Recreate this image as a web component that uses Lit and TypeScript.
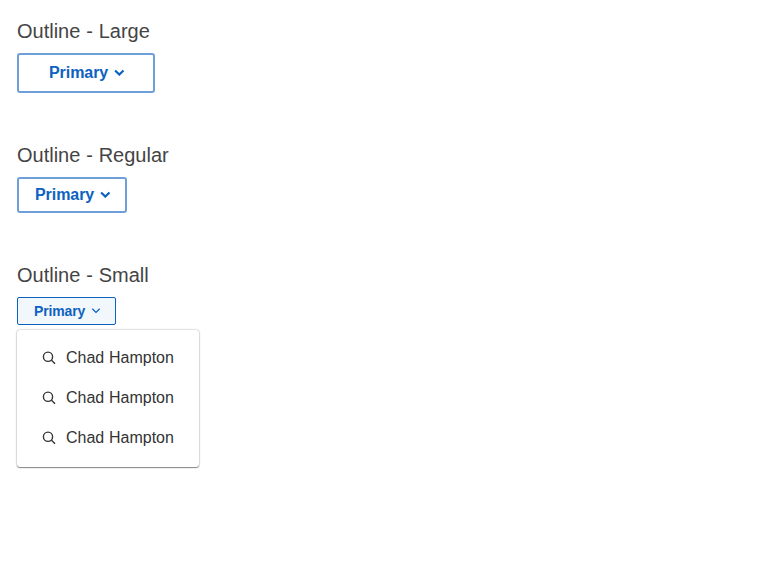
import { LitElement, html, css } from "lit";
import { customElement, property } from "lit/decorators.js";

@customElement("dropdown-button")
class DropdownButton extends LitElement {
  @property({ reflect: true }) size = "regular";
  @property({ type: Boolean, reflect: true }) open = false;

  static styles = css`
    :host { display: block; }
    button {
      display: flex; align-items: center; justify-content: flex-start;
      box-sizing: border-box; margin: 0; padding: 0 0 0 16px;
      font: bold 16px/20px "Liberation Sans", Arial, sans-serif;
      letter-spacing: -.06px;
      color: #0c62c0; background: #fff;
      border: 2px solid #6f9fd9; border-radius: 3px;
    }
    span { width: 59px; white-space: nowrap; }
    svg { display: block; flex: none; width: 12px; height: 8px; margin: -2px 0 0 5px; }
    path { fill: none; stroke: currentColor; stroke-width: 2.1; }
    :host([size="large"]) button { width: 138px; height: 40px; padding-left: 30px; }
    :host([size="regular"]) button { width: 110px; height: 36px; }
    :host([size="small"]) button {
      width: 99px; height: 28px; font-size: 14px; letter-spacing: -.15px;
      border: 1px solid #0c62c0; border-radius: 2px; background: #f2f7fc;
    }
    :host([size="small"]) span { width: 51px; }
    :host([size="small"]) svg { margin: -2px 0 0 5px; }
    :host([size="small"]) path { stroke-width: 1.3; }
  `;

  render() {
    const d = this.size === "small" ? "M2.3 2.7 6 6.4 9.7 2.7" : "M2.1 2.4 6.3 6.6 10.5 2.4";
    return html`<button type="button" aria-expanded=${this.open}>
      <span>Primary</span><svg viewBox="0 0 12 8"><path d=${d} /></svg>
    </button>`;
  }
}

@customElement("option-menu")
class OptionMenu extends LitElement {
  @property({ attribute: false }) items: string[] = [];

  static styles = css`
    :host {
      display: block; box-sizing: border-box; width: 182px; height: 137px; padding: 8px 0;
      background: #fff; border-radius: 3px;
      box-shadow: 0 0 2px rgba(0,0,0,.4), 0 1px 1px rgba(0,0,0,.4);
    }
    .item {
      display: flex; align-items: center; height: 40px; padding: 0 24px;
      gap: 9px; white-space: nowrap; word-spacing: .3px;
      font: 16px/20px "Liberation Sans", Arial, sans-serif; color: #333;
    }
    svg { width: 16px; height: 16px; flex: none; }
    svg * { fill: none; stroke: #333; stroke-width: 1.35; }
  `;

  render() {
    return this.items.map((t) => html`<div class="item">
      <svg viewBox="0 0 16 16"><circle cx="7" cy="6.7" r="4.6" /><path d="m10.3 10 3.7 3.7" /></svg>
      <span>${t}</span>
    </div>`);
  }
}

@customElement("app-root")
class AppRoot extends LitElement {
  static styles = css`
    :host { display: block; padding: 19px 17px; }
    h3 {
      margin: 0 0 10px; color: #444; word-spacing: .25px;
      font: 400 20px/24px "Liberation Sans", Arial, sans-serif;
    }
    .large { height: 124px; }
    .regular { height: 120px; }
    option-menu { margin-top: 5px; }
  `;

  render() {
    return html`
      <section class="large"><h3>Outline - Large</h3><dropdown-button size="large"></dropdown-button></section>
      <section class="regular"><h3>Outline - Regular</h3><dropdown-button size="regular"></dropdown-button></section>
      <section><h3>Outline - Small</h3><dropdown-button size="small" open></dropdown-button>
        <option-menu .items=${["Chad Hampton", "Chad Hampton", "Chad Hampton"]}></option-menu>
      </section>`;
  }
}
